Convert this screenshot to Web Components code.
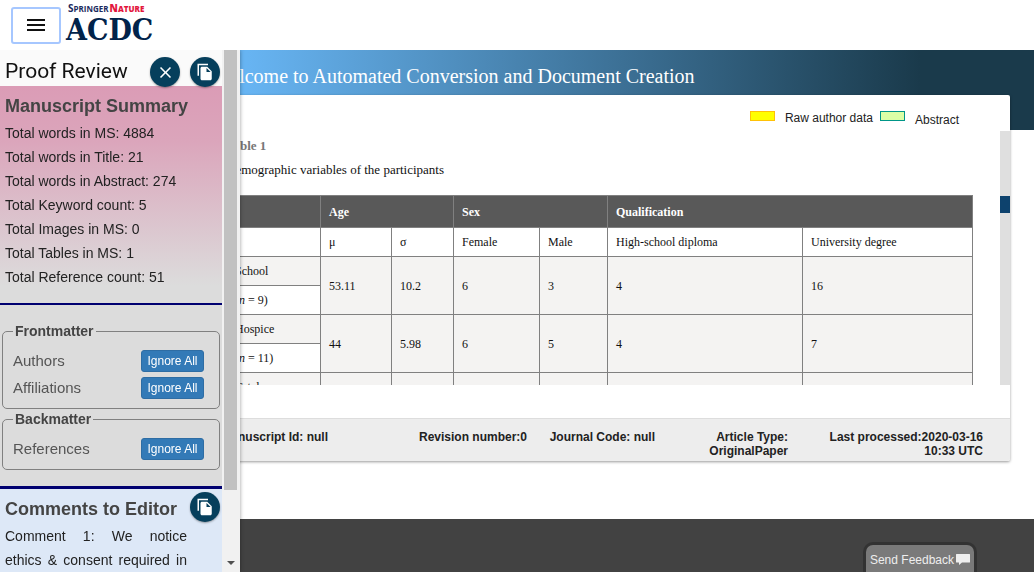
<!DOCTYPE html>
<html lang="en">
<head>
<meta charset="utf-8">
<title>ACDC Proof Review</title>
<style>
body { margin: 0; font-family: "Liberation Sans", Arial, sans-serif; font-size: 14px; color: #222; background: #fff; }
</style>
</head>
<body>
<acdc-app></acdc-app>

<template id="t-app">
  <style>
    :host { display: flex; flex-direction: column; min-height: 100vh; }
    app-header { position: relative; z-index: 3; }
    .banner { height: 45px; padding: 0 24px 35px 213px; display: flex; align-items: center; background: linear-gradient(to right, #67b4f2 24%, #1a3a4b 89%); color: #fff; }
    h1 { margin: 6px 0 0; font: 20px/24px "Liberation Serif", serif; white-space: nowrap; }
    proof-card { margin: -35px 24px 58px; }
    footer { flex: 1; background: #424242; }
    side-drawer { position: fixed; top: 50px; bottom: 0; left: 0; width: 240px; z-index: 2; }
    feedback-tab { position: fixed; right: 57px; bottom: 0; }
  </style>
  <app-header></app-header>
  <main>
    <div class="banner"><h1>Welcome to Automated Conversion and Document Creation</h1></div>
    <proof-card></proof-card>
  </main>
  <footer></footer>
  <side-drawer></side-drawer>
  <feedback-tab></feedback-tab>
</template>

<template id="t-header">
  <style>
    :host { display: flex; height: 50px; background: #fff; }
    button { margin: 7px 5px 6px 11px; width: 50px; padding: 0; background: #fff; border: 2px solid #a6c7ff; border-radius: 3px; display: flex; align-items: center; justify-content: center; }
    svg { margin-top: -2px; }
    .logo { display: block; color: #01234a; text-decoration: none; }
    .brand { display: flex; gap: 1px; margin: 2px 0 0 2px; font: 700 8px/12px "Open Sans", sans-serif; color: #1c2b5e; }
    .brand big { font-size: 10px; }
    .brand b { color: #e3173e; }
    .name { display: block; font: 700 30px/30px "DejaVu Serif Condensed", "DejaVu Serif", serif; }
  </style>
  <button aria-label="Menu"><svg width="18" height="12" viewBox="0 0 18 12"><path d="M0 0h18v2H0zM0 5h18v2H0zM0 10h18v2H0z" fill="#111"/></svg></button>
  <a class="logo" href="#"><span class="brand"><span><big>S</big>PRINGER</span><b><big>N</big>ATURE</b></span><span class="name">ACDC</span></a>
</template>

<template id="t-card">
  <style>
    :host { display: block; position: relative; background: #fff; border-radius: 2px; box-shadow: 0 1px 3px rgba(0,0,0,.4); }
    .legend { display: flex; justify-content: flex-end; height: 36px; padding-right: 51px; font-size: 12px; line-height: 16px; }
    .swatch { width: 23px; height: 8px; margin-top: 16px; border: 1px solid; }
    .raw { background: #ff0; border-color: #ffc107; }
    .abs { background: #dbffa6; border-color: #009688; margin-left: 7px; }
    .legend span { padding: 15px 0 0 10px; }
    .legend .low { padding-top: 17px; }
    .view { display: flex; height: 254px; overflow: hidden; }
    .doc { flex: 1; padding: 0 27px 0 202px; font-family: "Liberation Serif", serif; color: #111; }
    .track { width: 10px; background: #dfdfdf; padding-top: 65px; box-sizing: border-box; }
    .thumb { height: 17px; background: #0d426d; }
    h2 { margin: 7px 0 0; font-size: 13px; line-height: 16px; color: #777; }
    p { margin: 8px 0 17px; font-size: 13px; line-height: 16px; }
    .meta { display: grid; grid-template-columns: 304fr 199fr 128fr 133fr 195fr; margin-top: 33px; padding: 11px 27px 3px 0; border-top: 1px solid #ddd; background: #ededed; font: 700 12px/14px "Liberation Sans", sans-serif; text-align: right; border-radius: 0 0 2px 2px; }
    .meta :last-child { padding-left: 20px; }
  </style>
  <div class="legend"><i class="swatch raw"></i><span>Raw author data</span><i class="swatch abs"></i><span class="low">Abstract</span></div>
  <div class="view">
    <div class="doc">
      <h2>Table 1</h2>
      <p>Demographic variables of the participants</p>
      <data-grid></data-grid>
    </div>
    <div class="track"><div class="thumb"></div></div>
  </div>
  <div class="meta"><span>Manuscript Id: null</span><span>Revision number:0</span><span>Journal Code: null</span><span>Article Type: OriginalPaper</span><span>Last processed:2020-03-16 10:33 UTC</span></div>
</template>

<template id="t-grid">
  <style>
    :host { display: block; }
    table { width: 100%; table-layout: fixed; border-collapse: collapse; font-size: 12px; line-height: 14px; }
    th, td { box-sizing: border-box; height: 29px; padding: 0 8px; border: 1px solid #808080; text-align: left; }
    th { height: 32px; background: #595959; color: #fff; }
    .g { background: #f4f3f2; }
  </style>
  <table>
    <colgroup><col style="width:94px"><col style="width:71px"><col style="width:62px"><col style="width:86px"><col style="width:68px"><col style="width:195px"><col></colgroup>
    <thead><tr><th></th><th colspan="2">Age</th><th colspan="2">Sex</th><th colspan="2">Qualification</th></tr></thead>
    <tbody>
      <tr><td></td><td>μ</td><td>σ</td><td>Female</td><td>Male</td><td>High-school diploma</td><td>University degree</td></tr>
      <tr class="g"><td>School</td><td rowspan="2" class="g">53.11</td><td rowspan="2" class="g">10.2</td><td rowspan="2" class="g">6</td><td rowspan="2" class="g">3</td><td rowspan="2" class="g">4</td><td rowspan="2" class="g">16</td></tr>
      <tr><td>(<i>n</i> = 9)</td></tr>
      <tr class="g"><td>Hospice</td><td rowspan="2" class="g">44</td><td rowspan="2" class="g">5.98</td><td rowspan="2" class="g">6</td><td rowspan="2" class="g">5</td><td rowspan="2" class="g">4</td><td rowspan="2" class="g">7</td></tr>
      <tr><td>(<i>n</i> = 11)</td></tr>
      <tr class="g"><td>Total</td><td></td><td></td><td></td><td></td><td></td><td></td></tr>
    </tbody>
  </table>
</template>

<template id="t-drawer">
  <style>
    :host { display: flex; background: #fafafa; box-shadow: 0 0 4px rgba(0,0,0,.4); }
    .content { flex: 1; min-width: 0; overflow: hidden; }
    .title { display: flex; align-items: flex-end; gap: 10px; height: 36px; padding: 0 2px 0 5px; }
    h1 { flex: 1; align-self: center; margin: 6px 0 0; font: 400 21px/24px Roboto, sans-serif; color: #111; white-space: nowrap; }
    .groups { padding: 18px 2px 16px; background: #dcdcdc; border-bottom: 3px solid #000070; }
    p { margin: 0; }
    .note { width: 182px; text-align: justify; text-align-last: justify; }
    .bar { display: flex; flex-direction: column; align-items: center; width: 18px; background: #f1f1f1; }
    .thumb { width: 13px; margin-right: 1px; height: 440px; background: #c1c1c1; flex-shrink: 0; }
    .bar svg { margin: auto 0 7px; }
  </style>
  <div class="content">
    <div class="title"><h1>Proof Review</h1><round-button icon="close"></round-button><round-button icon="copy"></round-button></div>
    <report-section heading="Manuscript Summary" tone="pink">
      <p>Total words in MS: 4884</p>
      <p>Total words in Title: 21</p>
      <p>Total words in Abstract: 274</p>
      <p>Total Keyword count: 5</p>
      <p>Total Images in MS: 0</p>
      <p>Total Tables in MS: 1</p>
      <p>Total Reference count: 51</p>
    </report-section>
    <div class="groups">
      <issue-group heading="Frontmatter"><issue-row>Authors</issue-row><issue-row>Affiliations</issue-row></issue-group>
      <issue-group heading="Backmatter"><issue-row>References</issue-row></issue-group>
    </div>
    <report-section heading="Comments to Editor" tone="blue">
      <round-button slot="action" icon="copy"></round-button>
      <p class="note">Comment 1: We notice ethics &amp; consent required in</p>
    </report-section>
  </div>
  <div class="bar"><div class="thumb"></div><svg width="8" height="4" viewBox="0 0 8 4"><path d="M0 0h8L4 4z" fill="#505050"/></svg></div>
</template>

<template id="t-round">
  <style>
    :host { display: block; width: 30px; height: 30px; margin-bottom: -1px; }
    button { display: flex; align-items: center; justify-content: center; width: 30px; height: 30px; padding: 0; border: 0; border-radius: 50%; background: #063f5c; box-shadow: 0 1px 2px rgba(0,0,0,.35); }
    svg { display: none; fill: #fff; }
    :host([icon="close"]) .close, :host([icon="copy"]) .copy { display: block; }
  </style>
  <button>
    <svg class="close" width="19" height="19" viewBox="0 0 24 24"><path d="M19 6.410L17.590 5 12 10.590 6.410 5 5 6.410 10.590 12 5 17.590 6.410 19 12 13.410 17.590 19 19 17.590 13.410 12z"/></svg>
    <svg class="copy" width="18" height="18" viewBox="0 0 24 24"><path d="M16 1H2v16h2V3h12V1zm-1 4l6 6v10c0 1.100-.9 2-2 2H7.990C6.890 23 6 22.100 6 21V7c0-1.100.9-2 1.990-2h7zm-1 7h5.500L14 6.500V12z"/></svg>
  </button>
</template>

<template id="t-section">
  <style>
    :host { display: block; padding: 8px 2px 14px 5px; line-height: 24px; }
    :host([tone="pink"]) { background: linear-gradient(#db9cb6, #dba5bb 25%, #dcdcdc 92%); border-bottom: 2px solid #000070; }
    :host([tone="blue"]) { background: #dde8f7; min-height: 100px; }
    .head { display: flex; justify-content: space-between; height: 24px; margin-bottom: 3px; }
    h2 { margin: 0; font-size: 18px; line-height: 24px; color: #444; white-space: nowrap; }
    ::slotted([slot="action"]) { margin-top: -5px; }
  </style>
  <div class="head"><h2></h2><slot name="action"></slot></div>
  <slot></slot>
</template>

<template id="t-group">
  <style>
    :host { display: block; }
    :host(:not(:first-child)) { margin-top: 2px; }
    fieldset { margin: 0; padding: 8px 15px 7px 10px; border: 1px solid #808080; border-radius: 5px; }
    legend { padding: 0 2px; font-weight: 700; font-size: 14px; line-height: 16px; color: #444; }
  </style>
  <fieldset><legend></legend><slot></slot></fieldset>
</template>

<template id="t-row">
  <style>
    :host { display: flex; align-items: center; justify-content: space-between; height: 27px; font-size: 15px; color: #555; }
    button { width: 63px; height: 22px; padding: 0; font: 12px/20px "Liberation Sans", sans-serif; color: #fff; background: #337ab7; border: 1px solid #2e6da4; border-radius: 3px; white-space: nowrap; }
  </style>
  <span><slot></slot></span><button>Ignore All</button>
</template>

<template id="t-feedback">
  <style>
    :host { display: block; }
    button { display: flex; align-items: center; gap: 2px; height: 30px; padding: 2px 4px 0; border: 3px solid #333; border-bottom: 0; border-radius: 10px 10px 0 0; background: #7a7a7a; color: #eee; font: 12px/16px "Liberation Sans", sans-serif; white-space: nowrap; }
  </style>
  <button>Send Feedback <svg width="14" height="11" viewBox="0 0 14 11"><path d="M.5 0h13a.5.500 0 0 1 .5.500v7.500a.5.500 0 0 1-.5.500H6L3 11V8.500H.5A.5.500 0 0 1 0 8V.5A.5.500 0 0 1 .5 0z" fill="#eee"/></svg></button>
</template>

<script>
class Base extends HTMLElement {
  constructor() {
    super();
    this.attachShadow({ mode: "open" }).append(document.getElementById(this.constructor.template).content.cloneNode(true));
  }
}
const titled = (selector) => class extends Base {
  connectedCallback() { this.shadowRoot.querySelector(selector).textContent = this.getAttribute("heading"); }
};
class RoundButton extends Base {
  static template = "t-round";
  connectedCallback() {
    this.shadowRoot.querySelector("button").setAttribute("aria-label", this.getAttribute("icon") === "close" ? "Close" : "Copy");
  }
}
customElements.define("round-button", RoundButton);
customElements.define("issue-row", class extends Base { static template = "t-row"; });
customElements.define("issue-group", class extends titled("legend") { static template = "t-group"; });
customElements.define("report-section", class extends titled("h2") { static template = "t-section"; });
customElements.define("data-grid", class extends Base { static template = "t-grid"; });
customElements.define("feedback-tab", class extends Base { static template = "t-feedback"; });
customElements.define("side-drawer", class extends Base { static template = "t-drawer"; });
customElements.define("proof-card", class extends Base { static template = "t-card"; });
customElements.define("app-header", class extends Base { static template = "t-header"; });
customElements.define("acdc-app", class extends Base { static template = "t-app"; });
</script>
</body>
</html>
